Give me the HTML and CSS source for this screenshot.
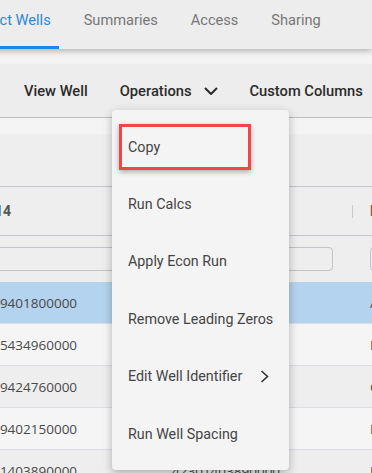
FILE: index.html
```html
<!DOCTYPE html>
<html lang="en">
<head>
    <meta charset="UTF-8">
    <meta name="viewport" content="width=device-width, initial-scale=1.0">
    <title>Project Wells</title>
    <link rel="stylesheet" href="styles.css">
</head>
<body>
    <div class="tabs">
        <div class="tab active">Project Wells</div>
        <div class="tab">Summaries</div>
        <div class="tab">Access</div>
        <div class="tab">Sharing</div>
    </div>

    <div class="toolbar">
        <div class="tool-button">View Well</div>
        <div class="tool-button">
            Operations
            <svg class="chevron-down" width="14" height="8" viewBox="0 0 14 8">
                <polyline points="1,1 7,7 13,1" fill="none" stroke="#2b2b2b" stroke-width="2"/>
            </svg>
        </div>
        <div class="tool-button">Custom Columns</div>
    </div>

    <div class="grid">
        <div class="grid-panel"></div>
        <div class="grid-row header-row">
            <div class="cell col-1">API 14</div>
            <div class="cell col-2">API 14 Full<span class="separator"></span></div>
            <div class="cell col-3"><span class="header-flag">Lease Name</span></div>
        </div>
        <div class="grid-row filter-row">
            <div class="cell col-1"><div class="filter-input"></div></div>
            <div class="cell col-2"><div class="filter-input"></div></div>
            <div class="cell col-3"><div class="filter-input"></div></div>
        </div>
        <div class="grid-row data-row selected">
            <div class="cell col-1">42389401800000</div>
            <div class="cell col-2">42389401800000</div>
            <div class="cell col-3">ANDERSON</div>
        </div>
        <div class="grid-row data-row">
            <div class="cell col-1">42385434960000</div>
            <div class="cell col-2">42385434960000</div>
            <div class="cell col-3">BRUNSON</div>
        </div>
        <div class="grid-row data-row">
            <div class="cell col-1">42389424760000</div>
            <div class="cell col-2">42389424760000</div>
            <div class="cell col-3">CARRASCO</div>
        </div>
        <div class="grid-row data-row">
            <div class="cell col-1">42389402150000</div>
            <div class="cell col-2">42389402150000</div>
            <div class="cell col-3">DORADO</div>
        </div>
        <div class="grid-row data-row">
            <div class="cell col-1">42301403890000</div>
            <div class="cell col-2">42301403890000</div>
            <div class="cell col-3">EAGLE</div>
        </div>
    </div>

    <div class="menu">
        <div class="menu-item first"><span class="highlight">Copy</span></div>
        <div class="menu-item">Run Calcs</div>
        <div class="menu-item">Apply Econ Run</div>
        <div class="menu-item">Remove Leading Zeros</div>
        <div class="menu-item">
            Edit Well Identifier
            <svg class="chevron-right" width="9" height="13" viewBox="0 0 9 13">
                <polyline points="1.5,1 7.5,6.5 1.5,12" fill="none" stroke="#333" stroke-width="1.6"/>
            </svg>
        </div>
        <div class="menu-item">Run Well Spacing</div>
    </div>
</body>
</html>
```

FILE: styles.css
```css
body {
    margin: 0;
    width: 372px;
    height: 473px;
    overflow: hidden;
    position: relative;
    background-color: #f4f4f4;
    font-family: Roboto, "Liberation Sans", sans-serif;
}
.tabs {
    display: flex;
    gap: 17px;
    height: 49px;
    margin-left: -42px;
    background-color: #ededed;
    box-shadow: 0 2px 6px rgba(0,0,0,0.28);
    position: relative;
    z-index: 1;
}
.tab {
    padding: 11px 8px 0;
    height: 35px;
    font-size: 14.6px;
    color: #777;
    white-space: nowrap;
    border-bottom: 3px solid transparent;
}
.tab.active {
    color: #2a88dd;
    border-bottom-color: #1e88e5;
}
.toolbar {
    display: flex;
    align-items: center;
    gap: 32px;
    margin-top: 15px;
    height: 53px;
    padding-left: 24px;
    background-color: #ededed;
    border-bottom: 1px solid #bdbdbd;
}
.tool-button {
    display: flex;
    align-items: center;
    gap: 12px;
    font-size: 14.7px;
    font-weight: 500;
    color: #2b2b2b;
    white-space: nowrap;
}
.grid {
    margin-top: 16px;
    margin-left: -43px;
    background-color: #eeeeee;
}
.grid-panel {
    height: 52px;
    border-bottom: 1px solid #c4c4cc;
}
.grid-row {
    display: flex;
    border-bottom: 1px solid #dcdce6;
}
.cell {
    flex: none;
    display: flex;
    align-items: center;
    padding: 0 12px;
    box-sizing: border-box;
    white-space: nowrap;
    overflow: hidden;
}
.col-1 { width: 203px; }
.col-2 { width: 197px; }
.col-3 { width: 200px; padding-left: 13px; }
.header-row {
    height: 48px;
    border-bottom-color: #c4c4cc;
    font-size: 14px;
    font-weight: bold;
    color: #555;
}
.header-row .col-2 {
    justify-content: space-between;
    padding-right: 4px;
}
.separator {
    width: 1px;
    height: 13px;
    background-color: #c8c8c8;
}
.header-flag {
    color: #a5532e;
}
.filter-row {
    height: 46px;
    border-bottom: none;
}
.filter-input {
    width: calc(100% - 12px);
    height: 24px;
    box-sizing: border-box;
    border: 1px solid #c2c2c8;
    border-radius: 4px;
}
.data-row {
    height: 42px;
    box-sizing: border-box;
    font-family: "Open Sans", sans-serif;
    font-size: 13.5px;
    color: #4a4a4a;
}
.data-row:nth-child(odd) {
    background-color: #f5f5f5;
}
.data-row.selected {
    background-color: #b3d3ee;
}
.menu {
    position: absolute;
    left: 112px;
    top: 110px;
    width: 177px;
    padding: 8px 0;
    background-color: #f4f4f4;
    border-radius: 4px;
    box-shadow: 0 3px 10px rgba(0,0,0,0.28);
    z-index: 2;
}
.menu-item {
    display: flex;
    align-items: center;
    gap: 18px;
    height: 57.4px;
    padding-left: 16px;
    font-size: 14.3px;
    color: #444;
    white-space: nowrap;
}
.menu-item.first {
    padding-left: 7px;
}
.highlight {
    display: flex;
    align-items: center;
    width: 132px;
    height: 46px;
    box-sizing: border-box;
    padding-left: 6px;
    border: 3px solid #f04646;
    box-shadow: 0 2px 5px rgba(0,0,0,0.3);
}
```
